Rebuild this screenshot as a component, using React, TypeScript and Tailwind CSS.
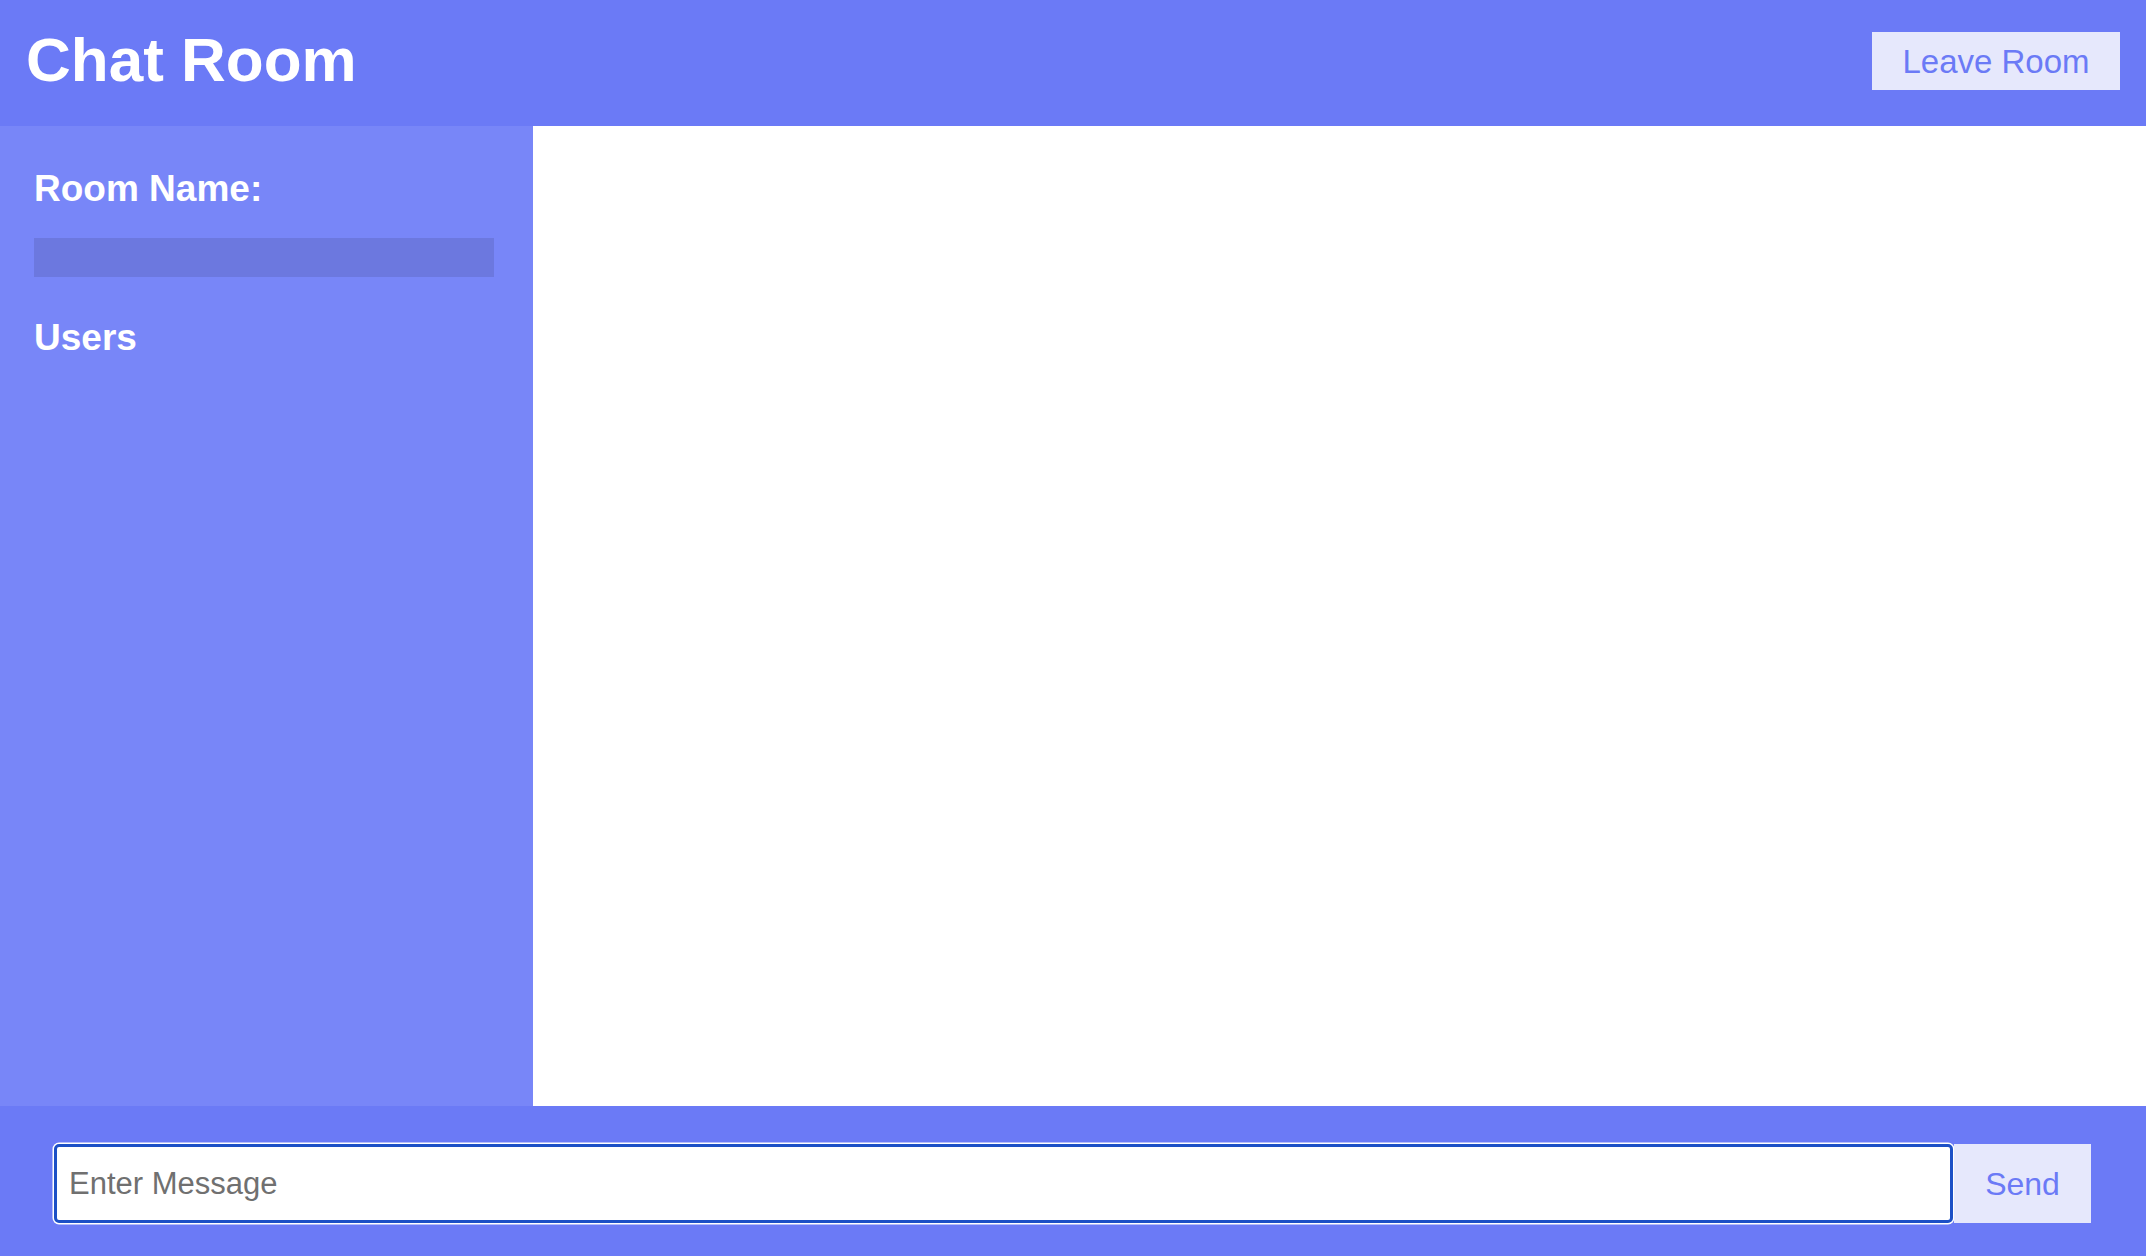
import { useState } from "react";

function Header() {
  return (
    <header className="flex h-[126px] shrink-0 items-start justify-between bg-[#6b7af6] px-[26px] pt-[29px]">
      <h1 className="text-[62px] font-bold leading-none text-white">Chat Room</h1>
      <button className="mt-[3px] flex h-[58px] w-[248px] items-center justify-center bg-[#e6e8fc] text-[33px] leading-none text-[#6b7af6]">
        Leave Room
      </button>
    </header>
  );
}

function Sidebar({ roomName, users }: { roomName: string; users: string[] }) {
  return (
    <aside className="w-[533px] shrink-0 bg-[#7886f8] pl-[34px] pr-[39px] pt-[44px] text-white">
      <h2 className="text-[37px] font-bold leading-none">Room Name:</h2>
      <div className="mt-[31px] h-[39px] bg-[#6c78df] px-3 text-[30px] leading-[39px]">{roomName}</div>
      <h2 className="mt-[42px] text-[37px] font-bold leading-none">Users</h2>
      <ul className="mt-4 space-y-2 text-[30px]">
        {users.map((u) => (
          <li key={u}>{u}</li>
        ))}
      </ul>
    </aside>
  );
}

export default function App() {
  const [message, setMessage] = useState("");

  return (
    <div className="flex h-screen flex-col font-['Liberation_Sans',Arial,sans-serif]">
      <Header />
      <main className="flex min-h-0 flex-1">
        <Sidebar roomName="" users={[]} />
        <div className="flex-1 bg-white" />
      </main>
      <form
        className="flex h-[150px] shrink-0 items-start bg-[#6b7af6] pl-[54px] pr-[55px] pt-[38px]"
        onSubmit={(e) => {
          e.preventDefault();
          setMessage("");
        }}
      >
        <input
          value={message}
          onChange={(e) => setMessage(e.target.value)}
          placeholder="Enter Message"
          className="h-[79px] min-w-0 flex-1 rounded-[5px] border-[3px] border-[#1c50c6] bg-white pl-[12px] text-[31px] text-black shadow-[0_0_0_1.5px_#ffffff] outline-none placeholder:text-[#707070]"
        />
        <button
          type="submit"
          className="ml-px flex h-[79px] w-[137px] items-center justify-center bg-[#e6e8fc] text-[32px] leading-none text-[#6b7af6]"
        >
          Send
        </button>
      </form>
    </div>
  );
}
